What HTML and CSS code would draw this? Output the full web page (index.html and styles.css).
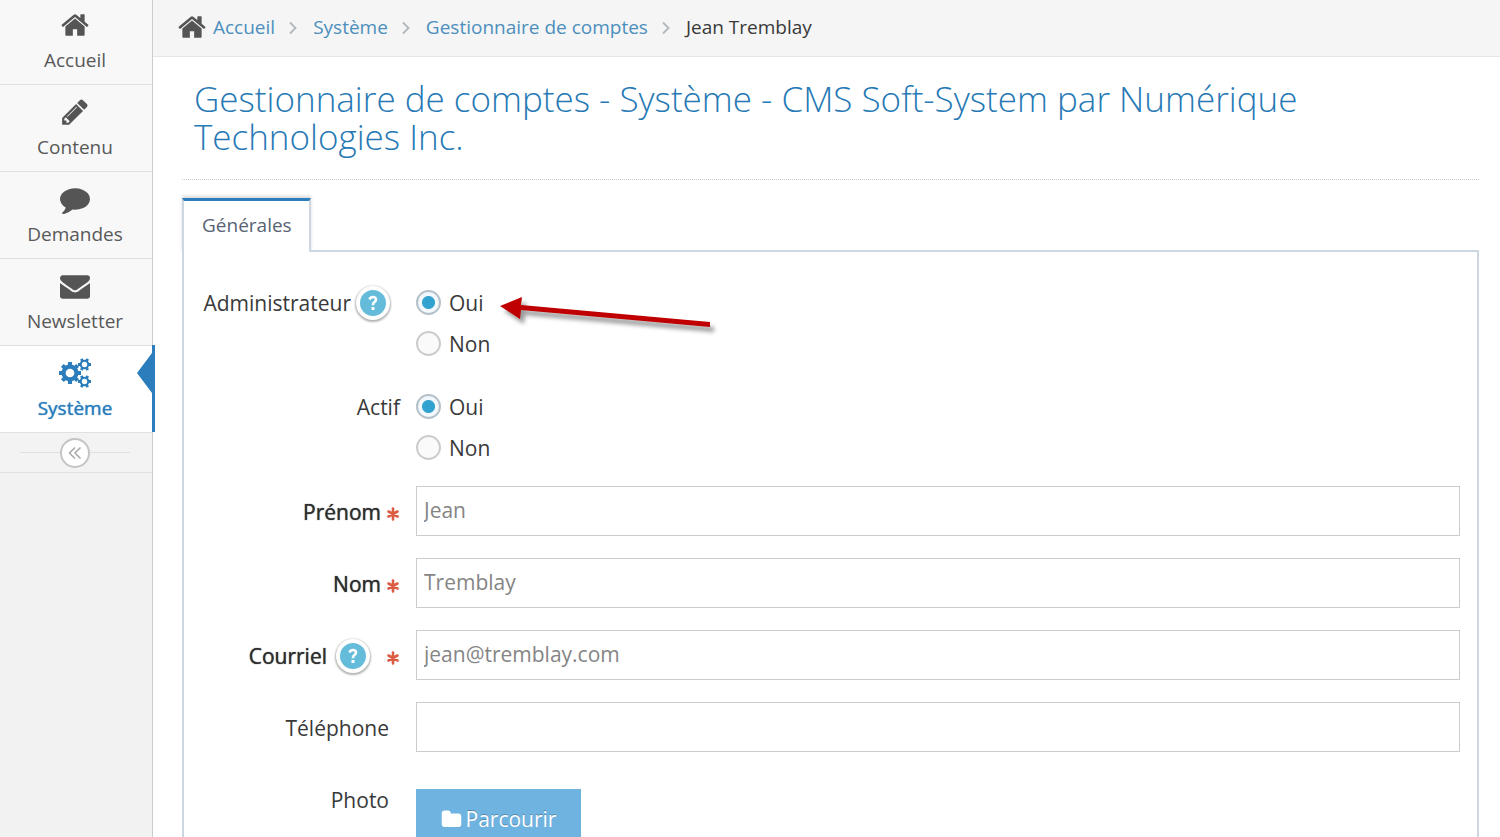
FILE: index.html
```html
<!DOCTYPE html>
<html lang="fr">
<head>
<meta charset="utf-8">
<title>Gestionnaire de comptes</title>
<link rel="stylesheet" href="styles.css">
</head>
<body>
<svg class="defs" aria-hidden="true">
  <symbol id="home" viewBox="0 0 1792 1792"><path d="M1472 992v480q0 26-19 45t-45 19h-384v-384h-256v384h-384q-26 0-45-19t-19-45v-480q0-1 .5-3t.5-3l575-474 575 474q1 2 1 6zm223-69l-62 74q-8 9-21 11h-3q-13 0-21-7l-692-577-692 577q-12 8-24 7-13-2-21-11l-62-74q-8-10-7-23.5t11-21.5l719-599q32-26 76-26t76 26l244 204v-195q0-14 9-23t23-9h192q14 0 23 9t9 23v408l219 182q10 8 11 21.5t-7 23.5z"/></symbol>
  <symbol id="pencil" viewBox="0 0 1792 1792"><path d="M491 1536l91-91-235-235-91 91v107h128v128h107zm523-928q0-22-22-22-10 0-17 7l-542 542q-7 7-7 17 0 22 22 22 10 0 17-7l542-542q7-7 7-17zm-54-192l416 416-832 832h-416v-416zm683 96q0 53-37 90l-166 166-416-416 166-165q36-38 90-38 53 0 91 38l235 234q37 39 37 91z"/></symbol>
  <symbol id="comment" viewBox="0 0 1792 1792"><path d="M1792 896q0 174-120 321.5t-326 233-450 85.5q-70 0-145-8-198 175-460 242-49 14-114 22-17 2-30.5-9t-17.5-29v-1q-3-4-.5-12t2-10 4.5-9.5l6-9 7-8.5 8-9q7-8 31-34.5t34.5-38 31-39.5 32.5-51 27-59 26-76q-157-89-247.5-220t-90.5-281q0-130 71-248.5t191-204.5 286-136.5 348-50.5q244 0 450 85.5t326 233 120 321.5z"/></symbol>
  <symbol id="envelope" viewBox="0 0 1792 1792"><path d="M1792 710v794q0 66-47 113t-113 47h-1472q-66 0-113-47t-47-113v-794q44 49 101 87 362 246 497 345 57 42 92.500 65.500t94.500 48 110 24.500h2q51 0 110-24.500t94.500-48 92.500-65.500q170-123 498-345 57-39 100-87zm0-294q0 79-49 151t-122 123q-376 261-468 325-10 7-42.500 31t-54 38.500-52 32.500-57.500 27-50 9h-2q-23 0-50-9t-57.500-27-52-32.500-54-38.500-42.500-31q-91-64-262-182.500t-205-142.500q-62-42-117-115.500t-55-136.500q0-78 41.500-130t118.500-52h1472q65 0 112.500 47t47.500 113z"/></symbol>
  <symbol id="folder" viewBox="0 0 1792 1792"><path d="M1728 608v704q0 92-66 158t-158 66h-1216q-92 0-158-66t-66-158v-960q0-92 66-158t158-66h320q92 0 158 66t66 158v32h672q92 0 158 66t66 158z"/></symbol>
  <symbol id="gear" viewBox="-12 -12 24 24"><circle r="7" fill="none" stroke="currentColor" stroke-width="4.500"/><path d="M0-12V-8M0 12V8M-12 0H-8M12 0H8M-8.300-8.300l3 3M8.300 8.300l-3-3M8.300-8.300l-3 3M-8.300 8.300l3-3" stroke="currentColor" stroke-width="4.500"/></symbol>
  <symbol id="smallgear" viewBox="-8 -8 16 16"><circle r="4.600" fill="none" stroke="currentColor" stroke-width="2.600"/><path d="M-8 0h3M8 0h-3M-4-6.900l1.500 2.600M4-6.900l-1.500 2.600M-4 6.900l1.500-2.600M4 6.900l-1.500-2.600" stroke="currentColor" stroke-width="3.400"/></symbol>
  <symbol id="gears" viewBox="0 0 34 30"><use href="#gear" x="1" y="4" width="22" height="22"/><use href="#smallgear" x="20" y="0" width="13" height="13"/><use href="#smallgear" x="20" y="17" width="13" height="13"/></symbol>
  <symbol id="chevron" viewBox="0 0 8 14"><path d="M1 1.500L6.500 7 1 12.500" fill="none" stroke="currentColor" stroke-width="1.800"/></symbol>
  <symbol id="collapse" viewBox="0 0 14 14"><path d="M7 1.500L1.500 7 7 12.500M12.500 1.500L7 7l5.500 5.500" fill="none" stroke="currentColor" stroke-width="1.600"/></symbol>
  <symbol id="star" viewBox="0 0 14 14"><path d="M7 1.500v11M2.500 4.500l9 5M11.500 4.500l-9 5" fill="none" stroke="currentColor" stroke-width="2.600" stroke-linecap="round"/></symbol>
  <symbol id="question" viewBox="0 0 10 16"><path d="M1.500 4.500Q2.500 2 5 2q3 0 3 2.500 0 1.500-1.500 2.500T5 9.500v.8" fill="none" stroke="currentColor" stroke-width="2.600"/><path d="M3.500 12h3v3h-3z"/></symbol>
</svg>
<div class="app">
  <nav class="sidebar" aria-label="Menu principal">
    <a class="item first" href="#"><svg class="icon"><use href="#home"/></svg><span>Accueil</span></a>
    <a class="item" href="#"><svg class="icon"><use href="#pencil"/></svg><span>Contenu</span></a>
    <a class="item" href="#"><svg class="icon"><use href="#comment"/></svg><span>Demandes</span></a>
    <a class="item" href="#"><svg class="icon"><use href="#envelope"/></svg><span>Newsletter</span></a>
    <a class="item active" href="#" aria-current="page"><svg class="icon gears"><use href="#gears"/></svg><span>Système</span></a>
    <div class="toggle"><button class="collapse" type="button" aria-label="Réduire le menu"><svg><use href="#collapse"/></svg></button></div>
  </nav>
  <div class="content">
    <nav class="breadcrumb" aria-label="Fil d’Ariane">
      <svg class="icon"><use href="#home"/></svg>
      <a href="#">Accueil</a><svg class="sep"><use href="#chevron"/></svg>
      <a href="#">Système</a><svg class="sep"><use href="#chevron"/></svg>
      <a href="#">Gestionnaire de comptes</a><svg class="sep"><use href="#chevron"/></svg>
      <span>Jean Tremblay</span>
    </nav>
    <main>
      <h1>Gestionnaire de comptes - Système - CMS Soft-System par Numérique Technologies Inc.</h1>
      <div class="tabs" role="tablist"><button class="tab" type="button" role="tab" aria-selected="true">Générales</button></div>
      <form class="panel">
        <div class="row radios" role="radiogroup" aria-labelledby="admin">
          <div class="label wide"><span id="admin">Administrateur</span><button class="help" type="button" aria-label="Aide administrateur"><svg><use href="#question"/></svg></button></div>
          <div class="choices">
            <label><input type="radio" name="admin" checked>Oui</label>
            <label><input type="radio" name="admin">Non</label>
            <svg class="arrow" viewBox="0 0 230 50" aria-hidden="true"><path d="M5 16L27 7l-1 8 189 17v5L26 20l-1 9z"/></svg>
          </div>
        </div>
        <div class="row radios" role="radiogroup" aria-labelledby="actif">
          <div class="label"><span id="actif">Actif</span></div>
          <div class="choices">
            <label><input type="radio" name="actif" checked>Oui</label>
            <label><input type="radio" name="actif">Non</label>
          </div>
        </div>
        <div class="row">
          <div class="label required"><label for="prenom">Prénom</label><svg class="star"><use href="#star"/></svg></div>
          <input class="field" id="prenom" type="text" value="Jean">
        </div>
        <div class="row">
          <div class="label required"><label for="nom">Nom</label><svg class="star"><use href="#star"/></svg></div>
          <input class="field" id="nom" type="text" value="Tremblay">
        </div>
        <div class="row">
          <div class="label required"><label for="courriel">Courriel</label><button class="help spaced" type="button" aria-label="Aide courriel"><svg><use href="#question"/></svg></button><svg class="star"><use href="#star"/></svg></div>
          <input class="field" id="courriel" type="text" value="jean@tremblay.com">
        </div>
        <div class="row">
          <div class="label optional"><label for="telephone">Téléphone</label></div>
          <input class="field" id="telephone" type="text">
        </div>
        <div class="row">
          <div class="label optional"><span>Photo</span></div>
          <button class="browse" type="button"><svg><use href="#folder"/></svg>Parcourir</button>
        </div>
      </form>
    </main>
  </div>
</div>
</body>
</html>
```

FILE: styles.css
```css
* { box-sizing: border-box; }
body { margin: 0; font: 19px/28px "Open Sans", sans-serif; color: #393939; background: #fff; }
a { text-decoration: none; }
button, input { font: inherit; margin: 0; }
svg { display: block; flex: none; fill: currentColor; }
.defs { position: absolute; width: 0; height: 0; }
.app { display: flex; height: 100vh; overflow: hidden; }

.sidebar { width: 153px; flex: none; background: #f2f2f2; border-right: 1px solid #ccc; }
.item { position: relative; display: flex; flex-direction: column; align-items: center; gap: 6px; height: 87px; padding: 12px 2px 0 0; background: #f8f8f8; border-bottom: 1px solid #e0e0e0; color: #585858; }
.item.first { height: 85px; padding-top: 10px; }
.icon { width: 30px; height: 30px; color: #555; }
.icon.gears { width: 34px; height: 30px; color: #2b7dbc; }
.item.active { background: #fff; color: #2b7dbc; }
.item.active span { text-shadow: 0 0 1px #2b7dbc; }
.item.active::before { content: ""; position: absolute; top: 7px; right: 0; border: 20px solid transparent; border-right: 15px solid #2b7dbc; border-left: 0; }
.item.active::after { content: ""; position: absolute; top: -1px; right: -3px; width: 3px; height: 87px; background: #2b7dbc; }
.toggle { display: flex; align-items: center; justify-content: center; height: 40px; background: #f3f3f3; border-bottom: 1px solid #e0e0e0; padding: 0 22px 0 20px; }
.toggle::before, .toggle::after { content: ""; flex: 1; height: 1px; background: #e0e0e0; }
.collapse { display: grid; place-items: center; width: 30px; height: 30px; padding: 0; border: 2px solid #c4c4c4; border-radius: 50%; background: #fff; color: #aaa; }
.collapse svg { width: 14px; height: 14px; }

.content { flex: 1; min-width: 0; }
.breadcrumb { display: flex; align-items: center; height: 57px; padding: 0 24px 3px; background: #f5f5f5; border-bottom: 1px solid #e5e5e5; }
.breadcrumb a { color: #4c8fbd; }
.breadcrumb .icon { margin-right: 6px; }
.sep { width: 8px; height: 14px; margin: 3px 16px 0 14px; color: #b2b6bf; }
main { padding: 23px 21px 0 29px; }
h1 { margin: 0 0 18px; padding: 0 12px 23px; border-bottom: 1px dotted #ccc; font-size: 35px; font-weight: 300; line-height: 38px; color: #2679b5; }
.tabs { display: flex; }
.tab { position: relative; height: 54px; padding: 0 17px 3px 18px; margin-bottom: -2px; background: #fff; border: 2px solid #ccd7e2; border-top: 3px solid #2b7dbc; border-bottom: 0; color: #576373; box-shadow: 0 -2px 3px rgba(0,0,0,.15); }
.panel { display: grid; gap: 22px; padding: 34px 17px 0 0; border: 2px solid #ccd7e2; border-bottom: 0; font-size: 21px; }
.row { display: grid; grid-template-columns: 216px 1fr; column-gap: 16px; }
.label { display: flex; align-items: center; justify-content: flex-end; height: 50px; padding-top: 2px; }
.required { color: #2e2e2e; text-shadow: 0 0 1px #2e2e2e; }
.optional { padding-right: 11px; }
.radios .label { height: 34px; padding-top: 0; }
.radios .wide { padding-right: 10px; }
.star { width: 14px; height: 14px; margin: 4px 0 0 5px; color: #dd5a43; }
.help { display: grid; place-items: center; width: 34px; height: 34px; margin-left: 5px; padding: 0; border: 4px solid #fff; border-radius: 50%; background: #65bcda; color: #fff; box-shadow: 0 1px 2px 1px rgba(0,0,0,.3); }
.help.spaced { margin: 0 11px 0 9px; }
.help svg { width: 10px; height: 16px; }
.choices { position: relative; display: grid; justify-content: start; row-gap: 8px; }
.choices label { display: flex; align-items: center; gap: 8px; height: 33px; }
input[type=radio] { appearance: none; width: 25px; height: 25px; border: 2px solid #ccc; border-radius: 50%; background: #fafafa; }
input[type=radio]:checked { border-color: #b5c0c8; background: radial-gradient(circle, #32a3ce 6px, #f3f8fc 7px); }
.arrow { position: absolute; left: 79px; top: 4px; width: 230px; height: 50px; color: #c00000; filter: drop-shadow(4px 5px 2px rgba(0,0,0,.4)); pointer-events: none; }
.radios + .radios { margin-top: 8px; }
.field { width: 100%; min-width: 0; height: 50px; padding: 0 7px 2px; border: 1px solid #ccc; border-radius: 0; background: #fff; color: #858585; outline: 0; }
.browse { display: flex; align-items: center; justify-content: center; justify-self: start; gap: 4px; width: 165px; height: 60px; margin-top: 15px; padding: 0; border: 0; background: #6fb3e0; color: #fff; text-shadow: 0 -1px 0 rgba(0,0,0,.25); }
.browse svg { width: 21px; height: 21px; }
```
